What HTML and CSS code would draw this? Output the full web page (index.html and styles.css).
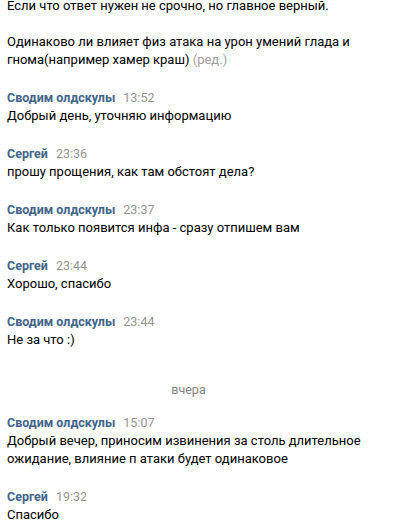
FILE: index.html
```html
<!DOCTYPE html>
<html lang="ru">
<head>
<meta charset="utf-8">
<link rel="stylesheet" href="styles.css">
</head>
<body>
<div class="chat">
  <div class="msg first">
    <div class="text">Если что ответ нужен не срочно, но главное верный.<br><br>Одинаково ли влияет физ атака на урон умений глада и гнома(например хамер краш) <span class="edited">(ред.)</span></div>
  </div>
  <div class="msg">
    <div class="head"><span class="name">Сводим олдскулы</span><span class="time">13:52</span></div>
    <div class="text">Добрый день, уточняю информацию</div>
  </div>
  <div class="msg">
    <div class="head"><span class="name">Сергей</span><span class="time">23:36</span></div>
    <div class="text">прошу прощения, как там обстоят дела?</div>
  </div>
  <div class="msg">
    <div class="head"><span class="name">Сводим олдскулы</span><span class="time">23:37</span></div>
    <div class="text">Как только появится инфа - сразу отпишем вам</div>
  </div>
  <div class="msg">
    <div class="head"><span class="name">Сергей</span><span class="time">23:44</span></div>
    <div class="text">Хорошо, спасибо</div>
  </div>
  <div class="msg">
    <div class="head"><span class="name">Сводим олдскулы</span><span class="time">23:44</span></div>
    <div class="text">Не за что :)</div>
  </div>
  <div class="divider">вчера</div>
  <div class="msg">
    <div class="head"><span class="name">Сводим олдскулы</span><span class="time">15:07</span></div>
    <div class="text">Добрый вечер, приносим извинения за столь длительное ожидание, влияние п атаки будет одинаковое</div>
  </div>
  <div class="msg">
    <div class="head"><span class="name">Сергей</span><span class="time">19:32</span></div>
    <div class="text">Спасибо</div>
  </div>
</div>
</body>
</html>
```
FILE: styles.css
```css
html, body {
  margin: 0;
  padding: 0;
  background: #fff;
}
body {
  font-family: Roboto, "Noto Sans", sans-serif;
  font-size: 13px;
  line-height: 18px;
  color: #000;
}
.chat {
  width: 370px;
  padding: 0 0 0 7px;
  margin-top: -3px;
  display: flex;
  flex-direction: column;
}
.msg {
  padding-bottom: 20px;
}
.head {
  display: flex;
  align-items: baseline;
  gap: 8px;
  font-size: 12.5px;
}
.name {
  font-weight: bold;
  color: #42648b;
}
.time {
  color: #939393;
}
.edited {
  color: #a0a0a0;
}
.divider {
  text-align: center;
  color: #828282;
  font-size: 12.5px;
  padding: 12px 0 15px;
  margin-left: -7px;
}
```
